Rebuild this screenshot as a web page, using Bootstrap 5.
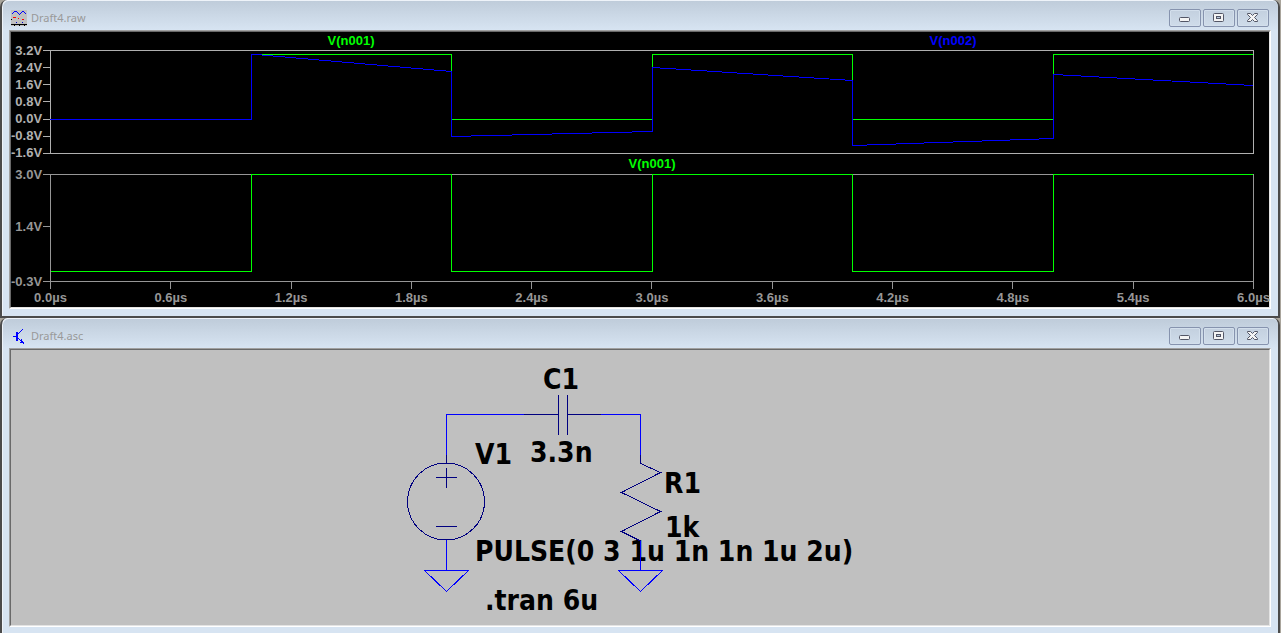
<!DOCTYPE html>
<html lang="en">
<head>
<meta charset="utf-8">
<meta name="viewport" content="width=device-width, initial-scale=1">
<title>Draft4</title>
<link rel="stylesheet" href="https://cdn.jsdelivr.net/npm/bootstrap@5.3.0/dist/css/bootstrap.min.css">
<script src="https://cdn.jsdelivr.net/npm/bootstrap@5.3.0/dist/js/bootstrap.bundle.min.js"></script>
<style>
  body { background: #a9a59c; font-family: "Liberation Sans", Arial, sans-serif; }
  .win { background: #d7e4f2; border: solid #4b4b4b; border-width: 0 2px 2px; border-radius: 7px 7px 0 0; margin-right: 1px; padding: 0 7px 7px; box-shadow: inset 1px 1px #eef3f9; }
  .win-last { border-bottom: 0; padding-bottom: 6px; }
  .win-head { background: linear-gradient(#bfccda, #d7e4f2 29px); margin: 1px -7px 0 -6px; padding: 5px 9px 0 8px; height: 29px; border-radius: 6px 6px 0 0; }
  .win-title { font: 11px/16px "Noto Sans", sans-serif; color: #999; }
  .win-tools { gap: 2px; }
  .win-btn { width: 32px; height: 18px; border: 1px solid #8693ae; border-radius: 2px; background: linear-gradient(#c3d0df, #cfdcea); box-shadow: inset 0 0 0 1px #d3dfec; }
  .client-wrap { border: 1px solid; border-color: #a0a0a0 #fff #fff #a0a0a0; }
  .client-in { border: 1px solid; border-color: #696969 #e3e3e3 #e3e3e3 #696969; }

  .plots { background: #000; font-size: 13px; line-height: 16px; font-weight: bold; }
  .pane { display: grid; grid-template-columns: 39px minmax(0, 1fr); padding-right: 15px; }
  .pane-1 { grid-template-rows: 18px 104px; color: #b0b0b0; }
  .pane-2 { grid-template-rows: 20px 108px 25px; color: #969696; }
  .legend-row { grid-column: 2; }
  .t-green { color: #0f0; }
  .t-blue { color: #00f; }
  .axis-y { display: grid; }
  .axis-y-1 { grid-template-rows: repeat(6, 1fr) 1px; }
  .axis-y-2 { grid-template-rows: 52fr 55fr 1px; }
  .axis-y li { height: 1px; display: flex; align-items: center; justify-content: flex-end; gap: 1px; min-height: 0; }
  .axis-y li::after { content: ""; width: 7px; height: 1px; background: currentColor; flex: none; }
  .axis-x { grid-column: 2; }
  .axis-x li { width: 1px; display: flex; flex-direction: column; align-items: center; }
  .axis-x li::before { content: ""; width: 1px; height: 7px; background: currentColor; margin-bottom: 1px; flex: none; }
  .trace { display: block; width: 100%; height: 100%; shape-rendering: crispEdges; fill: none; stroke-width: 1; }
  .trace * { vector-effect: non-scaling-stroke; }

  .sheet { background: #c0c0c0; }
  .sheet svg { display: block; width: 100%; height: 100%; min-height: 250px; fill: none; stroke-width: 1; shape-rendering: crispEdges; }
  .sheet text { font: bold 28px "DejaVu Sans Condensed", "DejaVu Sans", sans-serif; fill: #000; }
  .wire { stroke: #00f; }
  .part { stroke: #000080; }
</style>
</head>
<body class="d-flex flex-column min-vh-100">

<section class="win" aria-label="Draft4.raw">
  <header class="win-head d-flex align-items-center">
    <svg class="me-1" width="16" height="16" shape-rendering="crispEdges" aria-hidden="true">
      <rect width="16" height="16" fill="#c0c0c0"/>
      <path d="M.5 4.500L3.500 1.500H5.500L8.500 4.500L11.500 1.500H12.500L15.500 4.500" fill="none" stroke="#00f" stroke-width="1.300"/>
      <path d="M2 7h3v1h-3zM7 8h1v1h-1zM11 9h2v1h-2z" fill="#f00"/>
      <path d="M5 12h1v1h-1zM11 12h1v1h-1z" fill="#00c"/>
      <path d="M0 9h1v1h-1zM0 14h16v1h-16zM3 15h1v1h-1zM8 15h1v1h-1zM13 15h1v1h-1z" fill="#000"/>
    </svg>
    <h1 class="win-title mb-0 flex-grow-1">Draft4.raw</h1>
    <div class="d-flex win-tools">
      <button type="button" class="win-btn p-0 d-flex align-items-center justify-content-center" aria-label="Minimize"><svg width="12" height="12"><rect x=".5" y="5.5" width="10" height="4" rx="1" fill="#f4f4f4" stroke="#535666"/></svg></button>
      <button type="button" class="win-btn p-0 d-flex align-items-center justify-content-center" aria-label="Restore"><svg width="12" height="12"><rect x=".5" y="1.5" width="10" height="8" rx="1" fill="#f4f4f4" stroke="#535666"/><rect x="3.5" y="4.5" width="4" height="2" fill="#b8c8dc" stroke="#535666"/></svg></button>
      <button type="button" class="win-btn p-0 d-flex align-items-center justify-content-center" aria-label="Close"><svg width="12" height="12"><path d="M.5 1.500h3l2 2 2-2h3v1l-3 3 3 3v1h-3l-2-2-2 2h-3v-1l3-3-3-3z" fill="#f4f4f4" stroke="#535666"/></svg></button>
    </div>
  </header>
  <div class="client-wrap"><div class="client-in plots">
    <div class="pane pane-1">
      <div class="legend-row row g-0 text-center align-items-center">
        <div class="col t-green">V(n001)</div>
        <div class="col t-blue">V(n002)</div>
      </div>
      <ul class="axis-y axis-y-1 list-unstyled mb-0">
        <li>3.2V</li><li>2.4V</li><li>1.6V</li><li>0.8V</li><li>0.0V</li><li>-0.8V</li><li>-1.6V</li>
      </ul>
      <svg class="trace" viewBox="0 0 1204 104" preserveAspectRatio="none" role="img" aria-label="V(n001) and V(n002) over time">
        <rect x=".5" y=".5" width="1203" height="103" stroke="#b0b0b0"/>
        <path stroke="#0f0" d="M206 4.500H401.500V21M402 69.500H602M602.500 17V4.500H802.500V30M803 69.500H1003M1003.500 24V4.500H1203"/>
        <path stroke="#00f" d="M0 69.500H201.500V4.500H206L401.500 21.500V86.500L602.500 81.500V17.500L802.500 30.500V95.500L1003.500 88.500V24.500L1203 35.500"/>
      </svg>
    </div>
    <div class="pane pane-2">
      <div class="legend-row row g-0 text-center align-items-center">
        <div class="col t-green">V(n001)</div>
      </div>
      <ul class="axis-y axis-y-2 list-unstyled mb-0">
        <li>3.0V</li><li>1.4V</li><li>-0.3V</li>
      </ul>
      <svg class="trace" viewBox="0 0 1204 108" preserveAspectRatio="none" role="img" aria-label="V(n001) over time">
        <rect x=".5" y=".5" width="1203" height="107" stroke="#969696"/>
        <path stroke="#0f0" d="M.5 97.500H201.500V.5H401.500V97.500H602.500V.5H802.500V97.500H1003.500V.5H1203"/>
      </svg>
      <ul class="axis-x list-unstyled mb-0 d-flex justify-content-between">
        <li>0.0µs</li><li>0.6µs</li><li>1.2µs</li><li>1.8µs</li><li>2.4µs</li><li>3.0µs</li><li>3.6µs</li><li>4.2µs</li><li>4.8µs</li><li>5.4µs</li><li>6.0µs</li>
      </ul>
    </div>
  </div></div>
</section>

<section class="win win-last d-flex flex-column flex-grow-1" aria-label="Draft4.asc">
  <header class="win-head d-flex align-items-center">
    <svg class="me-1" width="16" height="16" shape-rendering="crispEdges" aria-hidden="true">
      <path d="M5 4h2v9h-2zM2 8h3v1h-3zM7 5h1v-1h1v-1h1v-1h1v-1h1v1h-1v1h-1v1h-1v1h-1v1h-1zM7 10h1v1h1v1h1v-1h1v2h1v1h1v2h-1v-1h-3v-1h1v-1h-1v-1h-1v-1h-1z" fill="#00f"/>
    </svg>
    <h2 class="win-title mb-0 flex-grow-1">Draft4.asc</h2>
    <div class="d-flex win-tools">
      <button type="button" class="win-btn p-0 d-flex align-items-center justify-content-center" aria-label="Minimize"><svg width="12" height="12"><rect x=".5" y="5.5" width="10" height="4" rx="1" fill="#f4f4f4" stroke="#535666"/></svg></button>
      <button type="button" class="win-btn p-0 d-flex align-items-center justify-content-center" aria-label="Restore"><svg width="12" height="12"><rect x=".5" y="1.5" width="10" height="8" rx="1" fill="#f4f4f4" stroke="#535666"/><rect x="3.5" y="4.5" width="4" height="2" fill="#b8c8dc" stroke="#535666"/></svg></button>
      <button type="button" class="win-btn p-0 d-flex align-items-center justify-content-center" aria-label="Close"><svg width="12" height="12"><path d="M.5 1.500h3l2 2 2-2h3v1l-3 3 3 3v1h-3l-2-2-2 2h-3v-1l3-3-3-3z" fill="#f4f4f4" stroke="#535666"/></svg></button>
    </div>
  </header>
  <div class="client-wrap flex-grow-1 d-flex"><div class="client-in sheet flex-grow-1">
    <svg role="img" aria-label="Series RC circuit driven by a pulse source">
      <text x="532" y="39">C1</text>
      <text x="464" y="114">V1</text>
      <text x="519" y="112">3.3n</text>
      <text x="653" y="143">R1</text>
      <text x="654" y="187">1k</text>
      <text x="464" y="211">PULSE(0 3 1u 1n 1n 1u 2u)</text>
      <text x="474" y="260">.tran 6u</text>
      <!-- wires and ground symbols -->
      <path class="wire" d="M435.500 105V64.500H513M590 64.500H629.500V105M435.500 190V220.500M629.500 191V220.500M413.500 220.500H457.500L435.500 241.500ZM607.500 220.500H651.500L629.500 241.500Z"/>
      <!-- capacitor -->
      <path class="part" d="M513 64.500H547.500M547.500 45V85M556.500 45V85M556.500 64.500H590"/>
      <!-- voltage source -->
      <circle class="part" cx="435" cy="151.500" r="38.500"/>
      <path class="part" d="M435.500 105V113M425 127.500H446M435.500 118V138M425 176.500H446"/>
      <!-- resistor -->
      <path class="part" d="M629.500 105V113.500L649.500 122.500L610.500 142.500L649.500 161.500L610.500 181.500L629.500 191"/>
    </svg>
  </div></div>
</section>
</body>
</html>
